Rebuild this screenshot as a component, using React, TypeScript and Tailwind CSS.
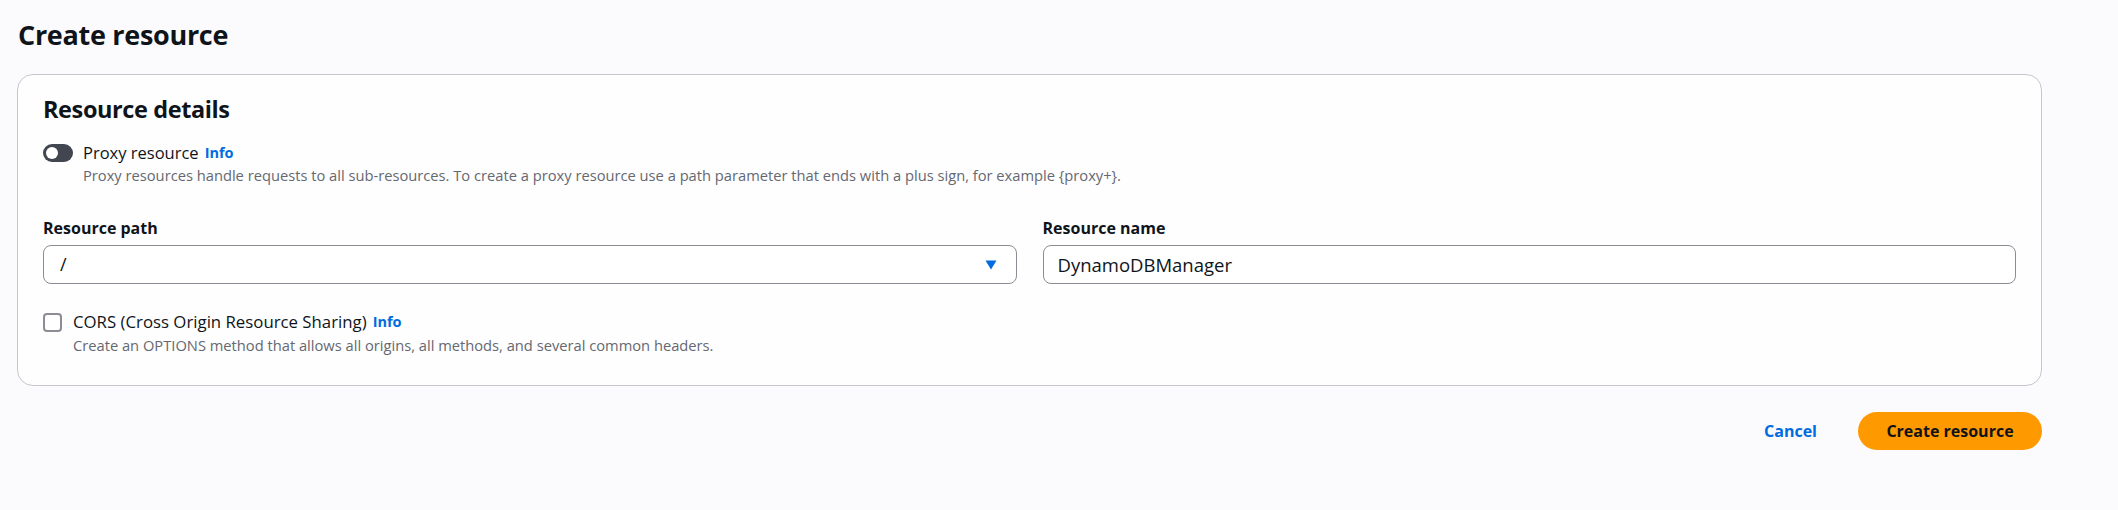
import React from "react";

const font = { fontFamily: '"Open Sans", "Noto Sans", sans-serif' };

function Info() {
  return <span className="ml-[6px] text-[14.5px] font-bold text-[#006ce0]">Info</span>;
}

export default function App() {
  return (
    <div className="min-h-[510px] w-full bg-[#fbfbfd] pl-[17px] pr-[76px] pt-[17px] text-[#0f141a]" style={font}>
      {/* Page title */}
      <h1 className="pl-[1px] text-[27px] font-bold leading-[36px] tracking-[-0.3px]">Create resource</h1>

      {/* Card */}
      <div className="mt-[21px] rounded-[16px] border border-[#c6c6cd] bg-[#fefefe] px-[25px] pb-[30px] pt-[19px]">
        <h2 className="text-[23.5px] font-bold leading-[30px] tracking-[-0.4px]">Resource details</h2>

        {/* Proxy toggle */}
        <div className="mt-[18px] flex items-center">
          <div className="flex h-[18px] w-[30px] items-center rounded-full bg-[#424650] pl-[3px]">
            <div className="h-[12px] w-[12px] rounded-full bg-white" />
          </div>
          <span className="ml-[10px] text-[16.5px] leading-[22px]">Proxy resource</span>
          <Info />
        </div>
        <p className="mt-[1px] pl-[40px] text-[14.7px] leading-[20px] text-[#656871]">
          Proxy resources handle requests to all sub-resources. To create a proxy resource use a path parameter that ends with a plus sign, for example {"{proxy+}"}.
        </p>

        {/* Path + name */}
        <div className="mt-[32px] grid grid-cols-2 gap-[26px]">
          <div>
            <div className="text-[16px] font-bold leading-[22px]">Resource path</div>
            <div className="mt-[6px] flex h-[39px] items-center justify-between rounded-[8px] border border-[#8c8c94] bg-white pl-[16px] pr-[19px]">
              <span className="text-[18px]">/</span>
              <svg width="12" height="10" viewBox="0 0 12 10">
                <path d="M0.5 0.5h11L6 9.5z" fill="#006ce0" />
              </svg>
            </div>
          </div>
          <div>
            <div className="text-[16px] font-bold leading-[22px]">Resource name</div>
            <div className="mt-[6px] flex h-[39px] items-center rounded-[8px] border border-[#8c8c94] bg-white pl-[14px]">
              <span className="text-[18.5px]">DynamoDBManager</span>
            </div>
          </div>
        </div>

        {/* CORS */}
        <div className="mt-[27px] flex items-center">
          <div className="h-[19px] w-[19px] rounded-[4px] border-2 border-[#8c8c94] bg-white" />
          <span className="ml-[11px] text-[16.8px] leading-[22px]">CORS (Cross Origin Resource Sharing)</span>
          <Info />
        </div>
        <p className="mt-[2px] pl-[30px] text-[14.7px] leading-[20px] text-[#656871]">
          Create an OPTIONS method that allows all origins, all methods, and several common headers.
        </p>
      </div>

      {/* Actions */}
      <div className="mt-[26px] flex items-center justify-end">
        <button className="mr-[41px] text-[16px] font-bold text-[#006ce0]">Cancel</button>
        <button className="h-[38px] w-[184px] rounded-full bg-[#ff9900] text-[16px] font-bold text-[#0f141a]">
          Create resource
        </button>
      </div>
    </div>
  );
}
